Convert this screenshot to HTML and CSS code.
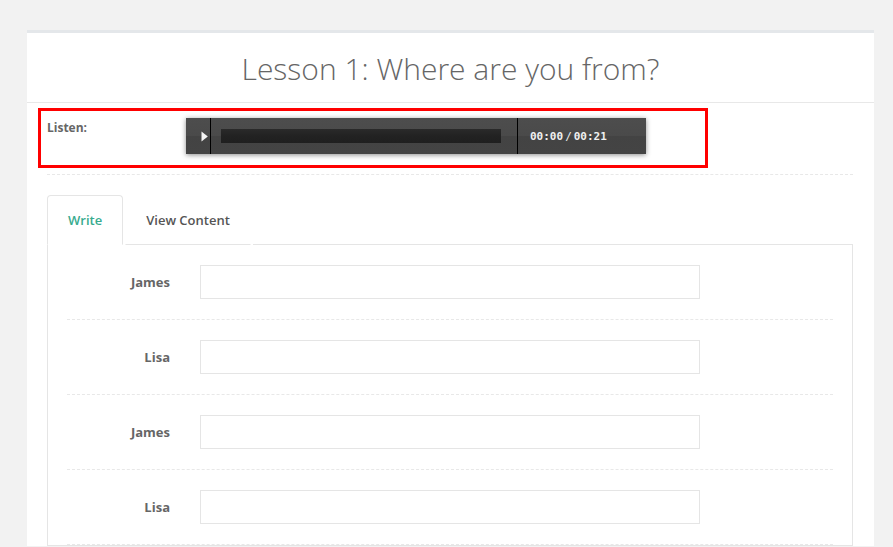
FILE: index.html
```html
<!DOCTYPE html>
<html>
<head>
<meta charset="utf-8">
<link rel="stylesheet" href="styles.css">
</head>
<body>
<div class="card">
  <div class="card-head">
    <h1 class="title">Lesson 1: Where are you from?</h1>
  </div>
  <div class="card-body">
    <div class="listen-box">
      <div class="listen-label">Listen:</div>
      <div class="player">
        <div class="play-btn">
          <svg width="7" height="11" viewBox="0 0 7 11"><path d="M0.5 0.5 L6.8 5.5 L0.5 10.5 Z" fill="#f4f4f4"/></svg>
        </div>
        <div class="progress-wrap"><div class="progress"></div></div>
        <div class="time"><span>00:00</span><span class="sep">/</span><span>00:21</span></div>
      </div>
    </div>
    <div class="divider"></div>
    <div class="tabs">
      <div class="tab active">Write</div>
      <div class="tab">View Content</div>
      <div class="tab-fill"></div>
    </div>
    <div class="panel">
      <div class="row"><label class="lbl">James</label><input class="field" type="text"></div>
      <div class="row"><label class="lbl">Lisa</label><input class="field" type="text"></div>
      <div class="row"><label class="lbl">James</label><input class="field" type="text"></div>
      <div class="row"><label class="lbl">Lisa</label><input class="field" type="text"></div>
    </div>
  </div>
</div>
</body>
</html>
```
FILE: styles.css
```css
html, body {
  margin: 0;
  padding: 0;
}
body {
  background: #f2f2f2;
  font-family: "Open Sans", "Liberation Sans", sans-serif;
  color: #666;
  overflow: hidden;
}
.card {
  margin: 30px 0 0 27px;
  width: 847px;
  background: #fff;
  border-top: 3px solid #e4e7ea;
}
.card-head {
  border-bottom: 1px solid #e8e8e8;
  height: 69px;
  display: flex;
  align-items: center;
  justify-content: center;
}
.title {
  margin: 0;
  font-weight: 300;
  font-size: 30px;
  line-height: 36px;
  color: #666;
  padding-top: 2px;
}
.card-body {
  padding: 5px 11px 0 11px;
}
.listen-box {
  width: 664px;
  height: 54px;
  border: 3px solid #ff0000;
  display: flex;
  align-items: flex-start;
}
.listen-label {
  font-size: 12px;
  font-weight: 700;
  color: #666;
  margin: 8px 0 0 6px;
  line-height: 17px;
  width: 139px;
}
.player {
  margin-top: 7px;
  width: 460px;
  height: 36px;
  display: flex;
  background: linear-gradient(#4d4d4d 0, #4a4a4a 50%, #434343 50%, #444 100%);
  box-shadow: 0 1px 5px rgba(0,0,0,0.45);
}
.play-btn {
  width: 25px;
  border-right: 1px solid #000;
  display: flex;
  align-items: center;
  justify-content: flex-end;
  padding-right: 2px;
  box-sizing: border-box;
}
.play-btn svg { display: block; margin-top: 1px; }
.progress-wrap {
  width: 307px;
  border-right: 1px solid #000;
  display: flex;
  align-items: center;
  padding-left: 10px;
  box-sizing: border-box;
}
.progress {
  width: 280px;
  height: 14px;
  background: linear-gradient(#2a2a2a, #222 50%, #1f1f1f);
}
.time {
  display: flex;
  align-items: center;
  padding-left: 12px;
  font-family: "DejaVu Sans Mono", "Liberation Mono", monospace;
  font-size: 11px;
  font-weight: 700;
  color: #f0f0f0;
}
.time .sep {
  padding: 0 2px;
  font-weight: 400;
}
.divider {
  margin: 6px 10px 0 9px;
  border-top: 1px dashed #e8e8e8;
}
.tabs {
  margin: 20px 10px 0 9px;
  display: flex;
  align-items: flex-end;
}
.tab {
  font-size: 13px;
  font-weight: 600;
  color: #555;
  padding: 0 20px;
  height: 48px;
  line-height: 48px;
  border: 1px solid transparent;
  border-bottom: 1px solid #e5e5e5;
  border-radius: 4px 4px 0 0;
  margin-right: 2px;
}
.tab.active {
  color: #37ab8e;
  border-color: #e5e5e5;
  border-bottom-color: #fff;
}
.tab-fill {
  flex: 1;
  border-bottom: 1px solid #e5e5e5;
}
.panel {
  margin: 0 10px 0 9px;
  border: 1px solid #e5e5e5;
  border-top: none;
  padding: 0 19px;
}
.row {
  display: flex;
  align-items: center;
  padding: 20px 0;
  border-bottom: 1px dashed #e8e8e8;
}
.lbl {
  width: 103px;
  text-align: right;
  font-size: 13px;
  font-weight: 700;
  color: #666;
  margin-right: 30px;
}
.field {
  width: 500px;
  height: 34px;
  box-sizing: border-box;
  border: 1px solid #e5e5e5;
  margin: 0;
  padding: 6px 12px;
  background: #fff;
  outline: none;
}
```
